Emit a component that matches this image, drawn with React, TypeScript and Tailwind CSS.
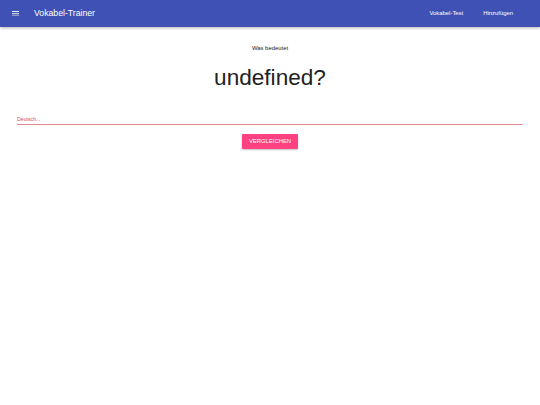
import React from "react";

export default function App() {
  return (
    <div className="w-[540px] h-[405px] bg-white" style={{ fontFamily: "'Liberation Sans', Arial, sans-serif" }}>
      <header className="h-[27px] bg-[#3f51b5] flex items-center text-white shadow-[0_1px_3px_rgba(0,0,0,0.3)] relative z-10">
        <div className="w-[34px] flex pl-[11.5px]">
          <svg width="7.5" height="5.5" viewBox="0 0 7.5 5.5" fill="white">
            <rect x="0" y="0" width="7.5" height="0.9" />
            <rect x="0" y="2.3" width="7.5" height="0.9" />
            <rect x="0" y="4.6" width="7.5" height="0.9" />
          </svg>
        </div>
        <div className="text-[8.7px]">Vokabel-Trainer</div>
        <div className="flex-1" />
        <nav className="flex text-[5.9px] mr-[27px] gap-[20px]">
          <span>Vokabel-Test</span>
          <span>Hinzufügen</span>
        </nav>
      </header>
      <main className="flex flex-col items-center">
        <div className="mt-[17px] text-[5.9px] leading-[8px] text-[#222]">Was bedeutet</div>
        <div className="mt-[13px] text-[22.6px] leading-[26px] text-[#222]">undefined?</div>
        <div className="self-stretch mx-[17px] mt-[25px]">
          <div className="text-[5.2px] text-[#e0474c] leading-[6px]">Deutsch...</div>
          <div className="mt-[2px] border-b border-[#e48a8f]" />
        </div>
        <button className="mt-[8.5px] h-[15px] w-[56px] bg-[#ff4081] text-white text-[5.9px] rounded-[1px] shadow-[0_1px_2px_rgba(0,0,0,0.25)] flex items-center justify-center">
          VERGLEICHEN
        </button>
      </main>
    </div>
  );
}
